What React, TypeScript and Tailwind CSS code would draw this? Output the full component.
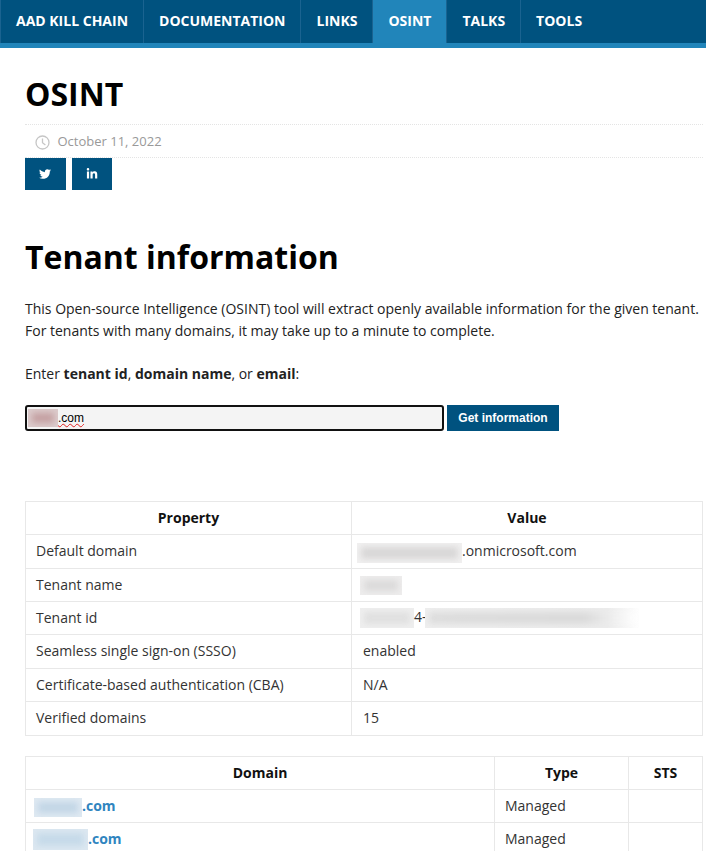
import React from "react";
import { FaTwitter, FaLinkedinIn } from "react-icons/fa";

function Blur({ outer, inner }: { outer: string; inner: string }) {
  return (
    <span className={`inline-flex align-middle overflow-hidden p-[4px] ${outer}`}>
      <span className={`block flex-1 blur-[3px] ${inner}`} />
    </span>
  );
}

const navItems = ["AAD KILL CHAIN", "DOCUMENTATION", "LINKS", "OSINT", "TALKS", "TOOLS"];

function Nav() {
  return (
    <nav className="flex h-[48px] bg-[#00527f] border-b-[5px] border-[#2185ba]">
      {navItems.map((t) => (
        <a
          key={t}
          className={`flex items-center px-[15px] pb-[2px] border-l border-[#1a6390] text-[14px] font-bold text-white ${t === "OSINT" ? "bg-[#2185ba]" : ""}`}
        >
          {t}
        </a>
      ))}
    </nav>
  );
}

const th = "border border-[#e8e8e8] px-[10px] pt-0 pb-[2px] text-center font-bold text-[14px] text-[#111]";
const td = "border border-[#e8e8e8] px-[10px] pt-0 pb-[2px] text-[14px]";
const dark = "text-[#333]";
const flat = "!pb-0";

export default function App() {
  return (
    <div className="font-['Open_Sans',sans-serif] bg-white w-[706px] h-[851px] overflow-hidden text-[#222]">
      <Nav />
      <main className="pl-[25px] pr-[3px]">
        <h1 className="mt-[26px] text-[32px] leading-[40px] font-bold text-black">OSINT</h1>
        <div className="mt-[10px] h-[34px] flex items-center pl-[10px] gap-[8px] border-y border-dotted border-[#e4e4e4] text-[13px] text-[#999]">
          <svg className="w-[15px] h-[15px] mt-[2px]" viewBox="0 0 15 15" fill="none" stroke="#c6c6c6" strokeWidth="1.3">
            <circle cx="7.5" cy="7.5" r="6.5" />
            <path d="M7.5 3.5V7.8L10.4 10" />
          </svg>
          <span className="pt-[1px] -ml-[0.5px]">October 11, 2022</span>
        </div>
        <div className="flex gap-[6px]">
          <a className="flex items-center justify-center w-[41px] h-[32px] pr-[1px] pb-[1px] bg-[#00527f] text-white">
            <FaTwitter className="w-[12px] h-[12px]" />
          </a>
          <a className="flex items-center justify-center w-[40px] h-[32px] pb-[1px] bg-[#00527f] text-white">
            <FaLinkedinIn className="w-[12px] h-[12px]" />
          </a>
        </div>
        <h2 className="mt-[43px] text-[32px] leading-[48px] font-bold text-black">Tenant information</h2>
        <p className="mt-[17px] text-[14px] leading-[22px] text-[#222] whitespace-nowrap">
          This Open-source Intelligence (OSINT) tool will extract openly available information for the given tenant.
          <br />
          For tenants with many domains, it may take up to a minute to complete.
        </p>
        <p className="mt-[21px] text-[14px] leading-[22px] text-[#222]">
          Enter <b>tenant id</b>, <b>domain name</b>, or <b>email</b>:
        </p>
        <div className="mt-[20px] flex gap-[3px] font-['Liberation_Sans',sans-serif]">
          <div className="w-[419px] h-[26px] flex items-center bg-[#f4f4f4] border-2 border-[#111] rounded-[3px] pl-[1px] text-[12px] text-black">
            <Blur outer="w-[30px] h-[18px] bg-[#dccbcc]" inner="bg-[#c4a0a2]" />
            <span className="underline decoration-wavy decoration-[#e02020] decoration-1">.com</span>
          </div>
          <button className="w-[112px] h-[26px] bg-[#00527f] text-white text-[12px] font-bold">Get information</button>
        </div>
        <table className="mt-[70px] w-[678px] table-fixed border-collapse">
          <colgroup>
            <col className="w-[326px]" />
            <col />
          </colgroup>
          <tbody>
            <tr className="h-[33px]">
              <th className={th}>Property</th>
              <th className={th}>Value</th>
            </tr>
            <tr className="h-[34px]">
              <td className={`${td} ${dark}`}>Default domain</td>
              <td className={`${td} ${dark} ${flat} !pl-[5px]`}>
                <Blur outer="w-[105px] h-[20px] bg-[#f1f0f0]" inner="bg-[#d8d7d7]" />
                .onmicrosoft.com
              </td>
            </tr>
            <tr className="h-[33px]">
              <td className={`${td} ${dark}`}>Tenant name</td>
              <td className={`${td} ${dark} !pl-[8px]`}>
                <Blur outer="w-[42px] h-[19px] bg-[#eeeded]" inner="bg-[#dbdada]" />
              </td>
            </tr>
            <tr className="h-[33px]">
              <td className={`${td} ${dark}`}>Tenant id</td>
              <td className={`${td} ${dark} !pl-[8px]`}>
                <Blur outer="w-[54px] h-[20px] bg-[#efefef]" inner="bg-[#e0e0e0]" />
                4-
                <Blur outer="w-[215px] h-[20px] -ml-[2px] bg-linear-to-r from-[#efefef] via-[#ececec] via-85% to-white" inner="bg-linear-to-r from-[#dddddd] via-[#dadada] via-75% to-white" />
              </td>
            </tr>
            <tr className="h-[34px]">
              <td className={`${td} ${dark}`}>Seamless single sign-on (SSSO)</td>
              <td className={`${td} ${dark} !pl-[11px]`}>enabled</td>
            </tr>
            <tr className="h-[33px]">
              <td className={`${td} ${dark}`}>Certificate-based authentication (CBA)</td>
              <td className={`${td} ${dark} !pl-[11px]`}>N/A</td>
            </tr>
            <tr className="h-[34px]">
              <td className={`${td} ${dark}`}>Verified domains</td>
              <td className={`${td} ${dark} !pl-[11px]`}>15</td>
            </tr>
          </tbody>
        </table>
        <table className="mt-[20px] w-[678px] table-fixed border-collapse">
          <colgroup>
            <col className="w-[469px]" />
            <col className="w-[134px]" />
            <col />
          </colgroup>
          <tbody>
            <tr className="h-[33px]">
              <th className={th}>Domain</th>
              <th className={th}>Type</th>
              <th className={th}>STS</th>
            </tr>
            <tr className="h-[33px]">
              <td className={`${td} ${flat} !pl-[8px] font-bold text-[#2f85bf]`}>
                <Blur outer="w-[48px] h-[19px] bg-[#dfe9f2]" inner="bg-[#c2d6e6]" />
                .com
              </td>
              <td className={`${td} ${dark}`}>Managed</td>
              <td className={td}></td>
            </tr>
            <tr className="h-[33px]">
              <td className={`${td} ${flat} !pl-[7px] font-bold text-[#2f85bf]`}>
                <Blur outer="w-[55px] h-[21px] bg-[#dde8f1]" inner="bg-[#c6dae9]" />
                .com
              </td>
              <td className={`${td} ${dark}`}>Managed</td>
              <td className={td}></td>
            </tr>
          </tbody>
        </table>
      </main>
    </div>
  );
}
